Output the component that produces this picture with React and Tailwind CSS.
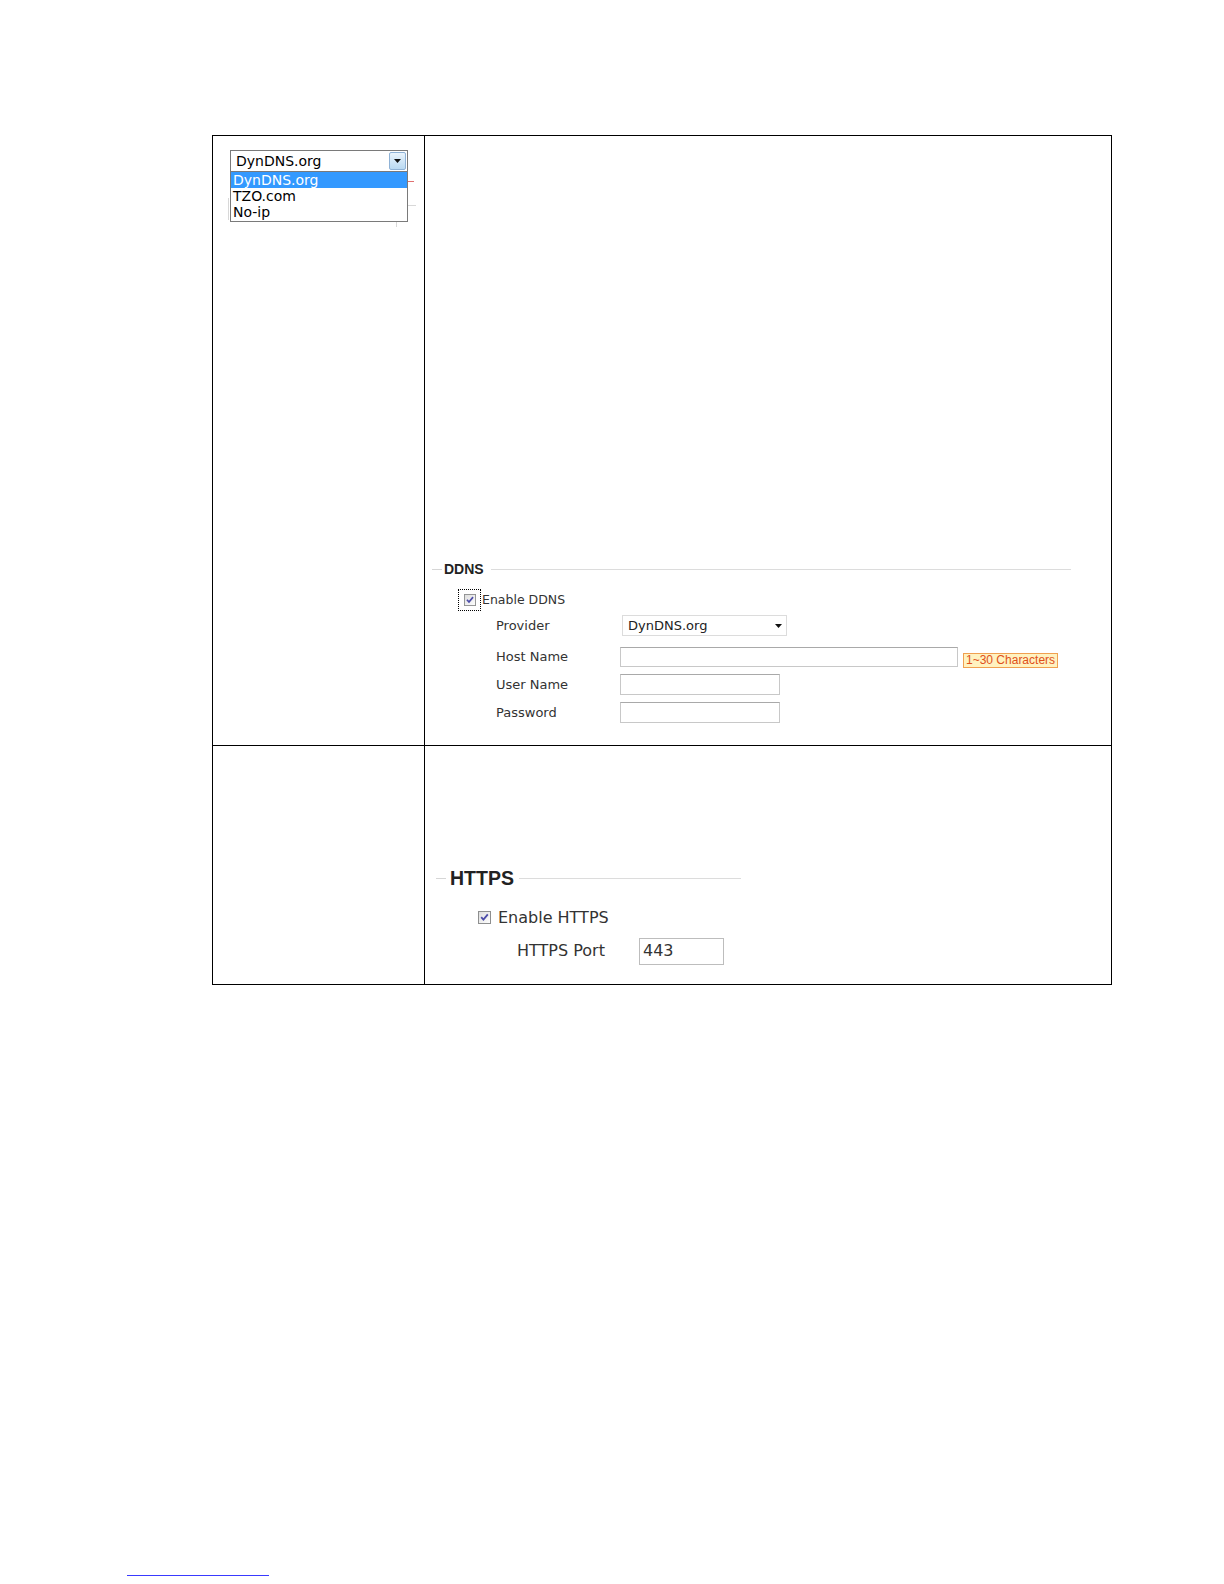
import React from 'react'

const verdana = { fontFamily: '"DejaVu Sans", Verdana, sans-serif' }
const arial = { fontFamily: '"Liberation Sans", Arial, sans-serif' }

// small checked checkbox, xp style
const CheckBox = ({ size = 13 }) => (
  <svg width={size} height={size} viewBox="0 0 13 13">
    <defs>
      <linearGradient id="cbg" x1="0" y1="0" x2="1" y2="1">
        <stop offset="0%" stopColor="#dcdcdc" />
        <stop offset="100%" stopColor="#ffffff" />
      </linearGradient>
    </defs>
    <rect x="0.5" y="0.5" width="12" height="12" fill="url(#cbg)" stroke="#8e8f8f" />
    <path d="M3.2 6.2 L5.4 8.6 L9.8 3.4" fill="none" stroke="#4b4ba8" strokeWidth="1.8" />
  </svg>
)

const Arrow = () => (
  <svg width="7" height="4" viewBox="0 0 7 4">
    <path d="M0 0 H7 L3.5 4 Z" fill="#111" />
  </svg>
)

const Legend = ({ title, lead, size, lineEnd, gap }) => (
  <div className="flex items-center">
    <div className={`h-px bg-[#d6d6d6] ${lead}`} />
    <span className={`font-bold text-[#222] leading-none ${size}`} style={arial}>{title}</span>
    <div className={`h-px bg-[#dcdcdc] ${gap} ${lineEnd}`} />
  </div>
)

const FormRow = ({ label, children, className }) => (
  <div className={`flex items-center ${className}`}>
    <span className="w-[124px] text-[13px] text-[#333]" style={verdana}>{label}</span>
    {children}
  </div>
)

const TextBox = ({ w }) => (
  <div className={`${w} h-full border border-[#c8c8c8] border-t-[#a9a9a9] bg-white`} />
)

const DropdownShot = () => (
  <div className="relative w-[178px]" style={verdana}>
    <div className="flex h-[22px] border border-[#7a7a7a] bg-white">
      <span className="flex-1 pl-[5px] text-[14px] leading-[20px] text-black">DynDNS.org</span>
      <div className="m-[1px] flex w-[17px] items-center justify-center rounded-[2px] border border-[#8fb2d6] bg-gradient-to-b from-[#eaf4fc] to-[#b9d9f2]">
        <Arrow />
      </div>
    </div>
    <div className="border border-t-0 border-[#7a7a7a] bg-white pb-[1px] text-[14px] leading-[16px] text-black">
      <div className="bg-[#3399ff] pl-[2px] text-white">DynDNS.org</div>
      <div className="pl-[2px]">TZO.com</div>
      <div className="pl-[2px]">No-ip</div>
    </div>
    {/* bits of the page behind the list */}
    <div className="absolute left-[178px] top-[31px] h-px w-[6px] bg-[#e07070]" />
    <div className="absolute left-[178px] top-[55px] h-px w-[8px] bg-[#d8d8d8]" />
    <div className="absolute left-[166px] top-[72px] h-[5px] w-px bg-[#d8d8d8]" />
    <div className="absolute left-[-2px] top-[48px] h-[22px] w-px bg-[#d8d8d8]" />
  </div>
)

export default function App() {
  return (
    <div className="relative h-[1584px] w-full overflow-hidden bg-white">
      <div className="pl-[212px] pt-[135px]">
        <div className="grid w-[900px] grid-cols-[212px_1fr] border border-black">
          {/* row 1 */}
          <div className="h-[610px] border-r border-b border-black pl-[17px] pt-[14px]">
            <DropdownShot />
          </div>
          <div className="flex h-[610px] flex-col justify-end border-b border-black pb-[22px] pl-[7px] pr-[40px]">
            <Legend title="DDNS" lead="w-[10px] mr-[2px]" size="text-[14px]" gap="ml-[7px]" lineEnd="flex-1" />
            <div className="mt-[13px] ml-[26px] flex h-[22px] items-center">
              <div className="flex h-[22px] w-[23px] items-center justify-center border border-dotted border-black">
                <CheckBox size={12} />
              </div>
              <span className="ml-[1px] text-[12.5px] text-[#333]" style={verdana}>Enable DDNS</span>
            </div>
            <div className="ml-[64px]">
              <FormRow label="Provider" className="mt-[4px] h-[21px]">
                <div className="ml-[2px] flex h-full w-[165px] items-center justify-between border border-[#dcdcdc] bg-white pl-[5px] pr-[4px]">
                  <span className="text-[13px] text-[#222]" style={verdana}>DynDNS.org</span>
                  <Arrow />
                </div>
              </FormRow>
              <FormRow label="Host Name" className="mt-[11px] h-[20px]">
                <TextBox w="w-[338px]" />
                <span
                  className="ml-[5px] mt-[6px] h-[15px] border border-[#f0a050] bg-[#fff2c0] px-[2px] text-[12px] leading-[13px] text-[#e0501a]"
                  style={arial}
                >
                  1~30 Characters
                </span>
              </FormRow>
              <FormRow label="User Name" className="mt-[7px] h-[21px]">
                <TextBox w="w-[160px]" />
              </FormRow>
              <FormRow label="Password" className="mt-[7px] h-[21px]">
                <TextBox w="w-[160px]" />
              </FormRow>
            </div>
          </div>

          {/* row 2 */}
          <div className="h-[238px] border-r border-black" />
          <div className="h-[238px] pl-[11px] pt-[123px]">
            <Legend title="HTTPS" lead="w-[10px] mr-[4px]" size="text-[19.5px]" gap="ml-[5px]" lineEnd="w-[222px]" />
            <div className="mt-[20px] ml-[42px] flex items-center">
              <CheckBox size={13} />
              <span className="ml-[7px] text-[16px] leading-[18px] text-[#333]" style={verdana}>Enable HTTPS</span>
            </div>
            <div className="mt-[11px] ml-[81px] flex h-[27px] items-center">
              <span className="w-[122px] text-[16px] text-[#333]" style={verdana}>HTTPS Port</span>
              <div className="flex h-full w-[85px] items-center border border-[#bdbdbd] bg-white pl-[3px]">
                <span className="text-[16px] text-[#333]" style={verdana}>443</span>
              </div>
            </div>
          </div>
        </div>
      </div>

      {/* footer link underline */}
      <div className="absolute left-[127px] top-[1575px] h-px w-[142px] bg-[#3a3aff]" />
    </div>
  )
}
